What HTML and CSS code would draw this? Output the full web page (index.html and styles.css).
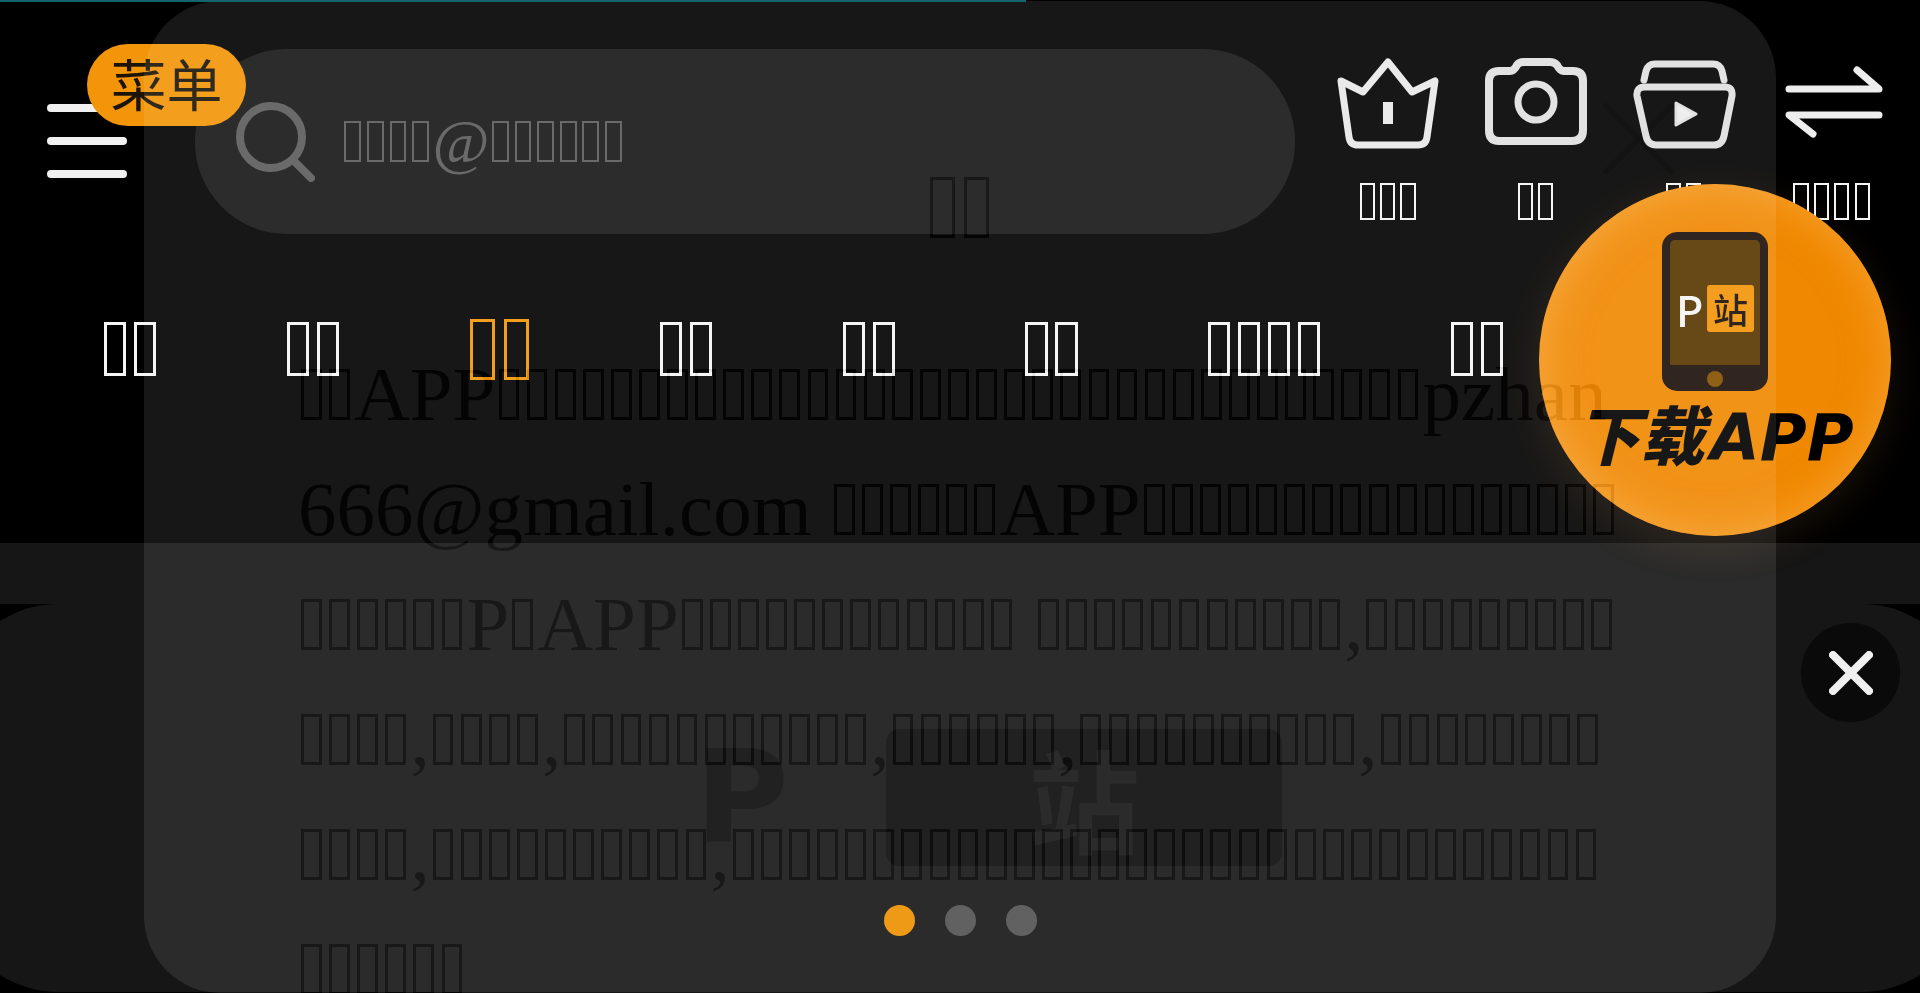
FILE: index.html
```html
<!DOCTYPE html>
<html lang="zh-CN">
  <head>
    <meta charset="UTF-8" />
    <meta name="viewport" content="width=device-width, initial-scale=1.0" />
    <title>P站</title>
    <link rel="stylesheet" href="styles.css">
  </head>
  <body>
    <div class="progress"></div>

    <header class="header">
      <div class="top-row">
        <button class="menu-btn" type="button">
          <span class="menu-line"></span>
          <span class="menu-line"></span>
          <span class="menu-line"></span>
          <span class="menu-badge">菜单</span>
        </button>

        <label class="search">
          <svg class="search-icon" viewBox="0 0 80 80" fill="none" stroke="#5c5c5c" stroke-width="8" stroke-linecap="round">
            <circle cx="36" cy="35" r="31" />
            <path d="M58 58L76 76" />
          </svg>
          <span class="search-hint"><i></i><i></i><i></i><i></i>@<i></i><i></i><i></i><i></i><i></i><i></i></span>
          <input class="search-input" type="text" />
        </label>

        <div class="actions">
          <a class="action" href="#">
            <svg class="action-icon" viewBox="0 0 104 104" fill="none" stroke="#e8e8e8" stroke-width="7" stroke-linejoin="round" stroke-linecap="round">
              <path d="M5 28L27 39L52 9L76 39L99 28L91 84Q90 92 82 92H22Q14 92 13 84Z" />
              <path d="M52 49V71" stroke-width="10" stroke-linecap="butt" />
            </svg>
            <span><i></i><i></i><i></i></span>
          </a>
          <a class="action" href="#">
            <svg class="action-icon" viewBox="0 0 104 104" fill="none" stroke="#e0e0e0" stroke-width="8" stroke-linejoin="round">
              <path d="M15 18H26Q30 18 33 12Q35 9 40 9H66Q70 9 73 12Q76 18 80 18H89Q99 18 99 28V77Q99 88 88 88H15Q5 88 5 77V28Q5 18 15 18Z" />
              <circle cx="52" cy="49" r="18" stroke-width="7" />
            </svg>
            <span><i></i><i></i></span>
          </a>
          <a class="action" href="#">
            <svg class="action-icon" viewBox="0 0 104 104" fill="none" stroke="#e0e0e0" stroke-width="7" stroke-linejoin="round" stroke-linecap="round">
              <path d="M12 27L14 18Q16 11 23 11H81Q88 11 90 18L92 27" />
              <path d="M13 34H93Q101 34 100 43L92 83Q90 92 82 92H24Q16 92 14 83L5 43Q4 34 13 34Z" />
              <path d="M44 50L64 61L44 72Z" fill="#ededed" stroke-width="3" />
            </svg>
            <span><i></i><i></i></span>
          </a>
          <a class="action" href="#">
            <svg class="action-icon" viewBox="0 0 104 104" fill="none" stroke="#ededed" stroke-width="7" stroke-linejoin="round" stroke-linecap="round">
              <path d="M9 36H99L77 17" />
              <path d="M99 62H9L33 81" />
            </svg>
            <span><i></i><i></i><i></i><i></i></span>
          </a>
        </div>
      </div>

      <nav class="tabs">
        <a class="tab" href="#"><i></i><i></i></a>
        <a class="tab" href="#"><i></i><i></i></a>
        <a class="tab active" href="#"><i></i><i></i></a>
        <a class="tab" href="#"><i></i><i></i></a>
        <a class="tab" href="#"><i></i><i></i></a>
        <a class="tab" href="#"><i></i><i></i></a>
        <a class="tab" href="#"><i></i><i></i><i></i><i></i></a>
        <a class="tab" href="#"><i></i><i></i></a>
      </nav>
    </header>

    <main class="banner">
      <div class="banner-top"></div>
      <div class="slide">
        <div class="slide-logo">
          <span class="slide-p">P</span>
          <span class="slide-zhan">站</span>
        </div>
        <div class="dots">
          <button class="dot current" type="button" aria-label="1"></button>
          <button class="dot" type="button" aria-label="2"></button>
          <button class="dot" type="button" aria-label="3"></button>
        </div>
      </div>
      <button class="banner-close" type="button" aria-label="close">
        <svg viewBox="0 0 44 44" stroke="#f0f0f0" stroke-width="8" stroke-linecap="round">
          <path d="M4 4L40 40M40 4L4 40" />
        </svg>
      </button>
    </main>

    <!-- Floating download button -->
    <a class="download" href="#">
      <span class="phone">
        <span class="phone-screen">
          <span class="phone-p">P</span>
          <span class="phone-zhan">站</span>
        </span>
        <span class="phone-home"></span>
      </span>
      <span class="download-text">下载<span class="download-app">APP</span></span>
    </a>

    <!-- Notice popup, fading in -->
    <div class="notice">
      <button class="notice-close" type="button" aria-label="close">
        <svg viewBox="0 0 76 76" stroke="#d0d0d0" stroke-width="6" stroke-linecap="round">
          <path d="M4 4L72 72M72 4L4 72" />
        </svg>
      </button>
      <h2 class="notice-title"><i></i><i></i></h2>
      <p class="notice-text"><i></i><i></i>APP<i></i><i></i><i></i><i></i><i></i><i></i><i></i><i></i><i></i><i></i><i></i><i></i><i></i><i></i><i></i><i></i><i></i><i></i><i></i><i></i><i></i><i></i><i></i><i></i><i></i><i></i><i></i><i></i><i></i><i></i><i></i><i></i><i></i>pzhan666@gmail.com <i></i><i></i><i></i><i></i><i></i><i></i>APP<i></i><i></i><i></i><i></i><i></i><i></i><i></i><i></i><i></i><i></i><i></i><i></i><i></i><i></i><i></i><i></i><i></i><i></i><i></i><i></i><i></i><i></i><i></i>P<i></i>APP<i></i><i></i><i></i><i></i><i></i><i></i><i></i><i></i><i></i><i></i><i></i><i></i> <i></i><i></i><i></i><i></i><i></i><i></i><i></i><i></i><i></i><i></i><i></i>,<i></i><i></i><i></i><i></i><i></i><i></i><i></i><i></i><i></i><i></i><i></i><i></i><i></i>,<i></i><i></i><i></i><i></i>,<i></i><i></i><i></i><i></i><i></i><i></i><i></i><i></i><i></i><i></i><i></i>,<i></i><i></i><i></i><i></i><i></i><i></i>,<i></i><i></i><i></i><i></i><i></i><i></i><i></i><i></i><i></i><i></i>,<i></i><i></i><i></i><i></i><i></i><i></i><i></i><i></i><i></i><i></i><i></i><i></i>,<i></i><i></i><i></i><i></i><i></i><i></i><i></i><i></i><i></i><i></i>,<i></i><i></i><i></i><i></i><i></i><i></i><i></i><i></i><i></i><i></i><i></i><i></i><i></i><i></i><i></i><i></i><i></i><i></i><i></i><i></i><i></i><i></i><i></i><i></i><i></i><i></i><i></i><i></i><i></i><i></i><i></i><i></i><i></i><i></i><i></i><i></i><i></i></p>
    </div>
  </body>
</html>
```
FILE: styles.css
```css
* {
  box-sizing: border-box;
}

body {
  display: flex;
  flex-direction: column;
  height: 100vh;
  margin: 0;
  overflow: hidden;
  background-color: #000;
  color: #f5f5f5;
  font-family: "Liberation Serif", serif;
}

a {
  color: inherit;
  text-decoration: none;
}

button {
  padding: 0;
  border: none;
  background: none;
  cursor: pointer;
}

svg {
  display: block;
}

/* empty glyph box, sized from the text around it */
i {
  display: inline-block;
  width: 0.27em;
  height: 0.66em;
  margin: 0 0.055em 0 0.04em;
  border: 2px solid currentColor;
}

.progress {
  position: fixed;
  top: 0;
  left: 0;
  width: 1026px;
  height: 2px;
  background-color: #14646f;
  z-index: 20;
}

/* header */
.header {
  padding: 49px 14px 148px 47px;
}

.top-row {
  display: flex;
  align-items: flex-start;
}

.menu-btn {
  position: relative;
  display: flex;
  flex-direction: column;
  gap: 25px;
  width: 80px;
  margin: 55px 68px 0 0;
  z-index: 1;
}

.menu-line {
  height: 8px;
  border-radius: 4px;
  background-color: #f0f0f0;
}

.menu-badge {
  position: absolute;
  top: -60px;
  left: 40px;
  width: 159px;
  height: 82px;
  border-radius: 41px;
  background-color: #f39508;
  color: #1c1408;
  font-family: "Noto Sans CJK SC", sans-serif;
  font-size: 56px;
  line-height: 76px;
  text-align: center;
}

.search {
  position: relative;
  display: flex;
  flex: 1;
  align-items: center;
  height: 185px;
  padding: 0 40px;
  border-radius: 92px;
  background-color: #181818;
}

.search-icon {
  width: 80px;
  height: 80px;
}

.search-hint {
  position: absolute;
  left: 147px;
  color: #5c5c5c;
  font-size: 62px;
  line-height: 69px;
  white-space: nowrap;
}

.search-input {
  flex: 1;
  min-width: 0;
  margin-left: 27px;
  padding: 0;
  border: none;
  outline: none;
  background: none;
  color: #f5f5f5;
  font-family: inherit;
  font-size: 62px;
}

.actions {
  display: flex;
  margin: 4px 0 0 19px;
}

.action {
  display: flex;
  flex-direction: column;
  align-items: center;
  gap: 16px;
  width: 148px;
  font-size: 56px;
  line-height: 56px;
}

.action-icon {
  width: 104px;
  height: 104px;
}

.tabs {
  display: flex;
  align-items: center;
  gap: 123px;
  height: 92px;
  margin-top: 69px;
  padding-left: 54px;
  font-size: 82px;
  line-height: 92px;
}

.tab {
  flex: none;
  white-space: nowrap;
}

.tab i,
.notice i {
  border-width: 3px;
}

.tab.active {
  color: #f39508;
  font-size: 92px;
}

/* banner */
.banner {
  position: relative;
  flex: 1;
  overflow: hidden;
}

.banner-top {
  height: 61px;
  background-color: #161616;
}

.slide {
  margin: 0 -49px;
  padding: 125px 0 56px;
  border-radius: 107px;
  background-color: #161616;
}

.slide-logo {
  display: flex;
  justify-content: center;
  align-items: center;
  gap: 40px;
  height: 137px;
  font-weight: bold;
}

.slide-p {
  width: 208px;
  color: #0b0b0b;
  font-family: "DejaVu Sans", sans-serif;
  font-size: 128px;
  line-height: 137px;
  text-align: center;
}

.slide-zhan {
  width: 396px;
  border-radius: 14px;
  background-color: #0b0b0b;
  color: #161616;
  font-family: "Noto Sans CJK SC", sans-serif;
  font-size: 112px;
  line-height: 137px;
  text-align: center;
}

.dots {
  display: flex;
  justify-content: center;
  gap: 30px;
  margin-top: 39px;
}

.dot {
  width: 31px;
  height: 31px;
  border-radius: 50%;
  background-color: #525252;
}

.dot.current {
  background-color: #ee9000;
}

.banner-close {
  position: absolute;
  top: 80px;
  right: 20px;
  display: grid;
  place-items: center;
  width: 99px;
  height: 99px;
  border-radius: 50%;
  background-color: #0a0a0a;
}

.banner-close svg {
  width: 44px;
  height: 44px;
}

/* download button */
.download {
  position: fixed;
  top: 184px;
  right: 29px;
  display: flex;
  flex-direction: column;
  align-items: center;
  width: 352px;
  height: 352px;
  padding-top: 48px;
  border-radius: 50%;
  background-color: #f08800;
  box-shadow: inset 0 0 44px rgba(255, 190, 100, 0.5), 0 12px 40px rgba(255, 180, 80, 0.1);
}

.phone {
  display: flex;
  flex-direction: column;
  align-items: center;
  gap: 6px;
  width: 106px;
  height: 159px;
  padding-top: 8px;
  border-radius: 15px;
  background-color: #1c1008;
}

.phone-screen {
  display: flex;
  justify-content: center;
  align-items: center;
  gap: 4px;
  width: 90px;
  height: 125px;
  padding-top: 12px;
  border-radius: 5px 5px 0 0;
  background-color: #583600;
}

.phone-p {
  color: #f5f5f5;
  font-family: "Noto Sans CJK SC", sans-serif;
  font-size: 42px;
  font-weight: 500;
  line-height: 47px;
}

.phone-zhan {
  width: 47px;
  border-radius: 3px;
  background-color: #f39508;
  color: #1c1008;
  font-family: "Noto Sans CJK SC", sans-serif;
  font-size: 35px;
  font-weight: 500;
  line-height: 47px;
  text-align: center;
}

.phone-home {
  width: 16px;
  height: 16px;
  border-radius: 50%;
  background-color: #865000;
}

.download-text {
  margin-top: 6px;
  color: #000;
  font-family: "Noto Sans CJK SC", sans-serif;
  font-size: 64px;
  font-style: italic;
  font-weight: 900;
  line-height: 70px;
  white-space: nowrap;
}

.download-app {
  margin-left: 6px;
  font-family: "DejaVu Sans", sans-serif;
}

/* notice popup */
.notice {
  position: fixed;
  top: 1px;
  bottom: 0;
  left: 50%;
  width: 85%;
  margin-left: -42.5%;
  padding: 160px 154px 0;
  overflow: hidden;
  border-radius: 77px;
  background-color: #fff;
  color: #333;
  opacity: 0.09;
  z-index: 10;
}

.notice-close {
  position: absolute;
  top: 101px;
  right: 100px;
}

.notice-close svg {
  width: 74px;
  height: 74px;
}

.notice-title {
  margin: 0 0 84px;
  font-size: 92px;
  font-weight: normal;
  line-height: 92px;
  text-align: center;
}

.notice-text {
  margin: 0;
  font-size: 77px;
  line-height: 115px;
  word-break: break-all;
}
```
